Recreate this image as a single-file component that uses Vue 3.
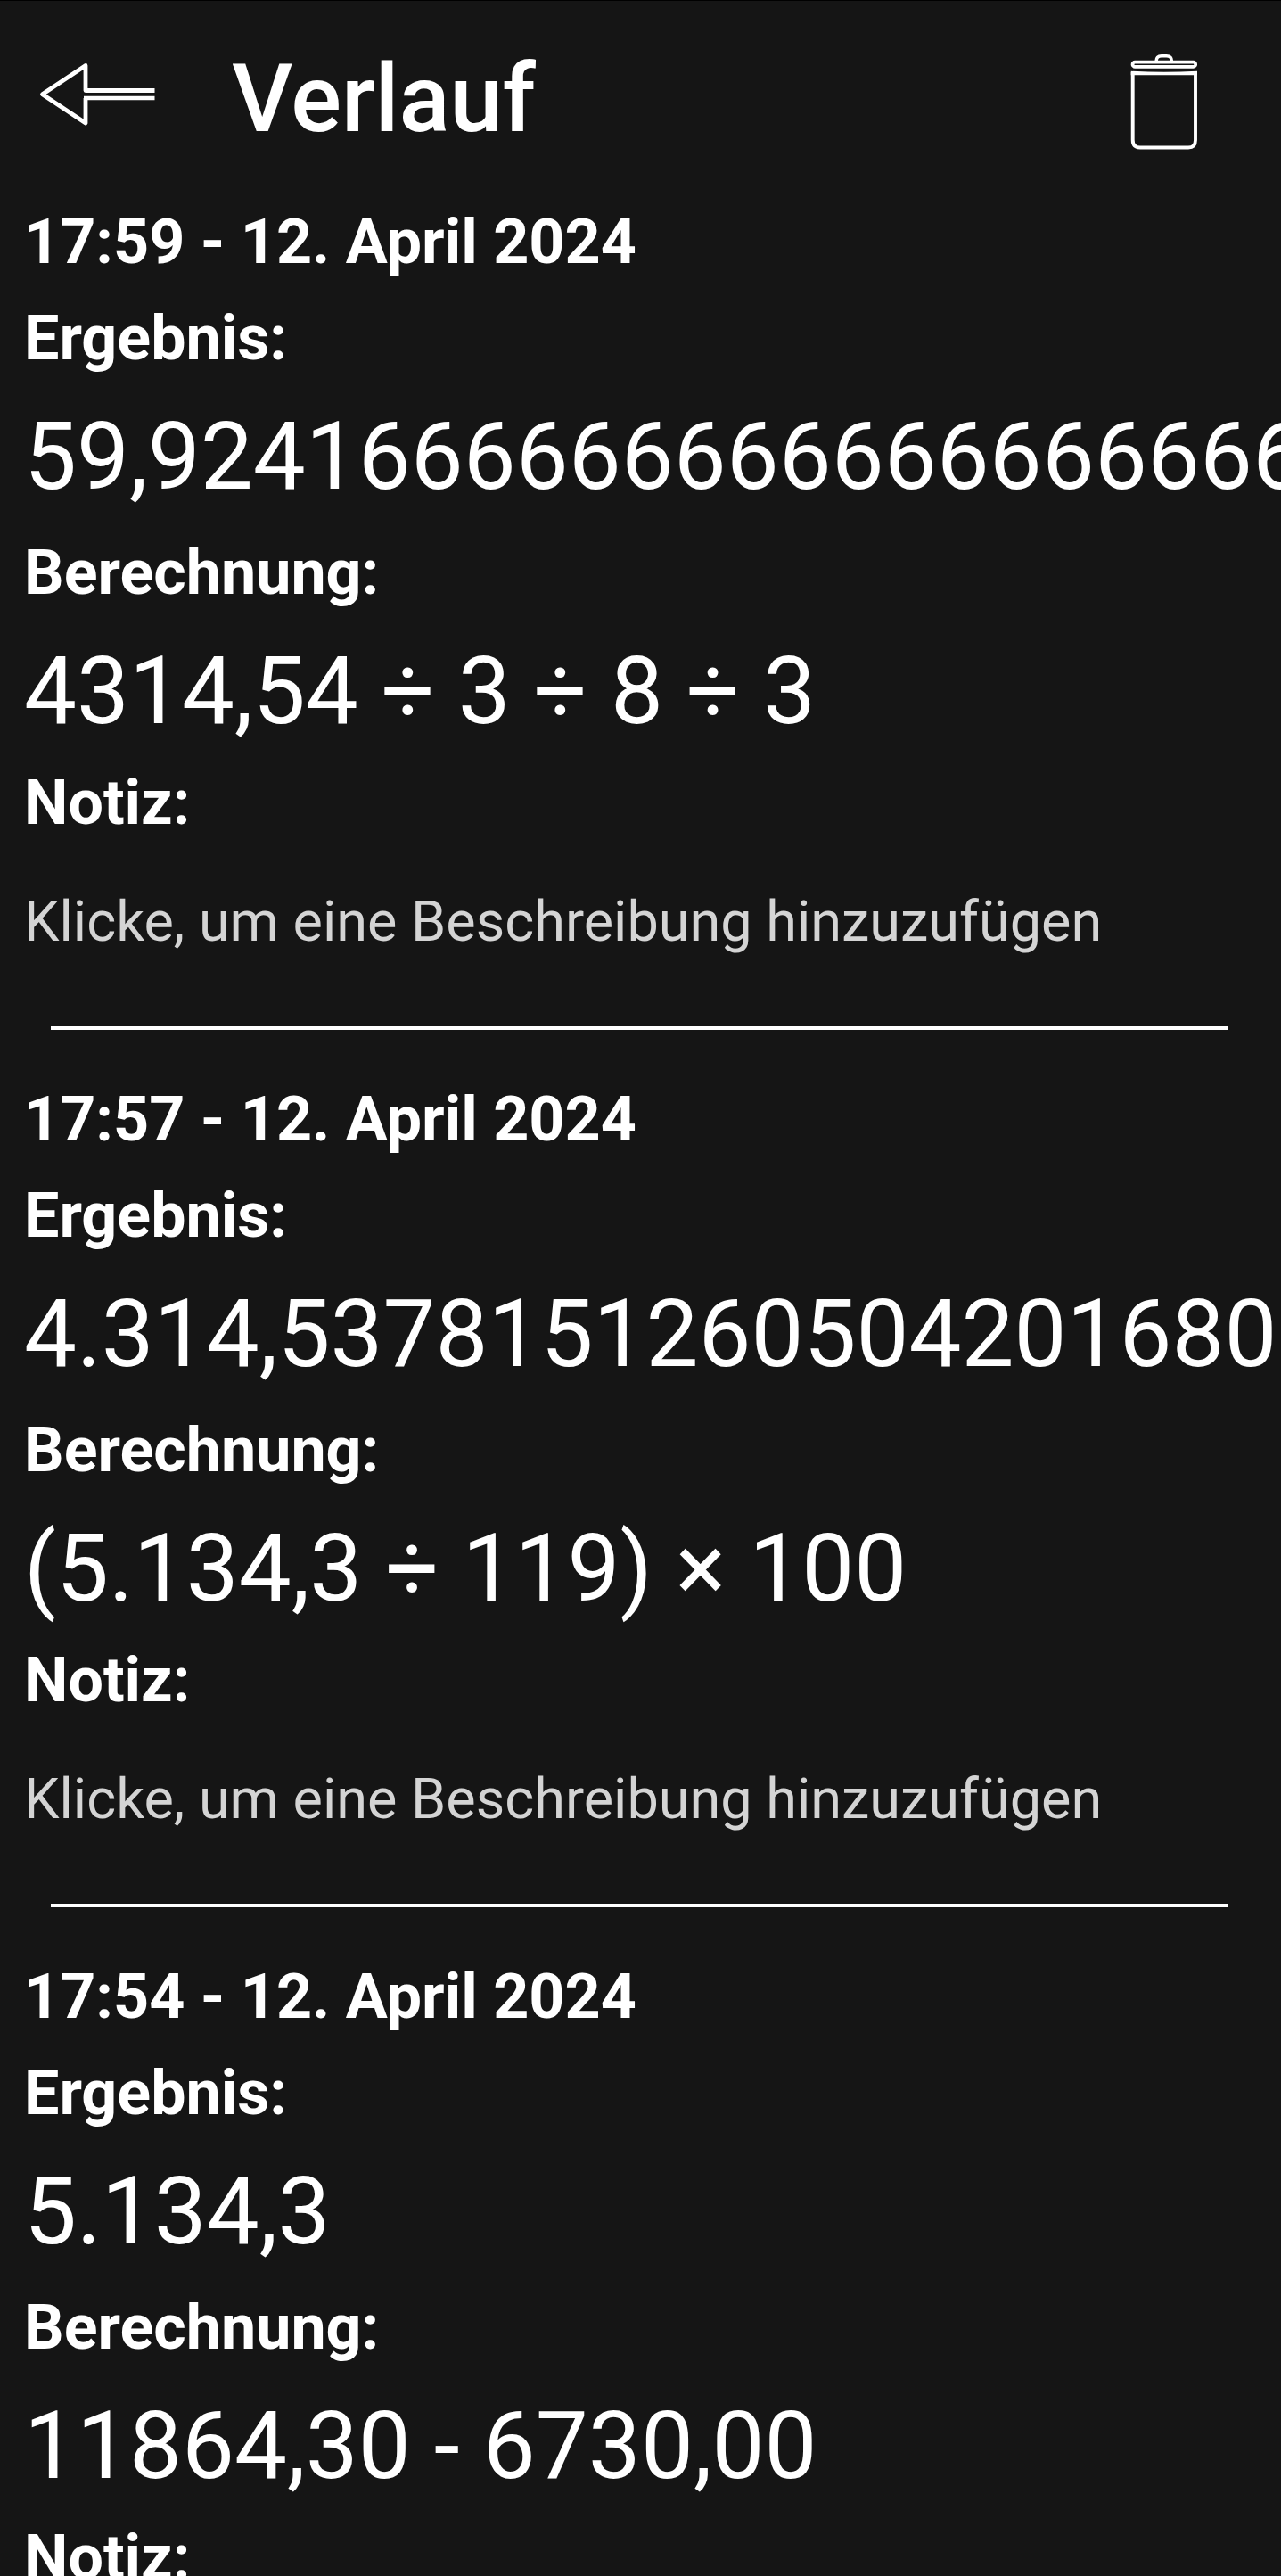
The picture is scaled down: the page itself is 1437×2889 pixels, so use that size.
<script setup>
import { ref } from 'vue'

const entries = ref([
  {
    id: 1,
    date: '17:59 - 12. April 2024',
    result: '59,92416666666666666666666666666667',
    calculation: '4314,54 ÷ 3 ÷ 8 ÷ 3',
    note: '',
  },
  {
    id: 2,
    date: '17:57 - 12. April 2024',
    result: '4.314,5378151260504201680672268908',
    calculation: '(5.134,3 ÷ 119) × 100',
    note: '',
  },
  {
    id: 3,
    date: '17:54 - 12. April 2024',
    result: '5.134,3',
    calculation: '11864,30 - 6730,00',
    note: '',
  },
])
</script>

<template>
  <div class="screen">
    <header class="bar">
      <button class="icon-button" type="button" aria-label="Zurück">
        <svg width="132" height="83" viewBox="0 0 132 83" fill="none" stroke="#fff">
          <path d="M129.500 31.500H52V3.500L3.500 35.700L52 68V40" stroke-width="4.800" stroke-linejoin="round" />
          <path d="M50 40H129.500" stroke-width="4.600" />
        </svg>
      </button>
      <h1 class="title">Verlauf</h1>
      <button class="icon-button" type="button" aria-label="Verlauf löschen">
        <svg width="76" height="117" viewBox="0 0 76 117" fill="none" stroke="#fff">
          <path d="M29 16C29 11.500 31.500 9.800 35 9.800H40.500C44 9.800 46.500 11.500 46.500 16" stroke-width="3.500" />
          <rect x="2.500" y="16.600" width="70.700" height="5.200" rx="2.600" stroke-width="3.700" />
          <path d="M0.700 26.700Q38 29 75 26.700V31.300H0.700Z" fill="#fff" stroke="none" />
          <path d="M2.700 28V104Q2.700 112.500 11 112.500H65Q73 112.500 73 104V28" stroke-width="3.900" />
        </svg>
      </button>
    </header>

    <main class="list">
      <article v-for="entry in entries" :key="entry.id" class="entry">
        <h2 class="label">{{ entry.date }}</h2>
        <h3 class="label">Ergebnis:</h3>
        <p class="value">{{ entry.result }}</p>
        <h3 class="label">Berechnung:</h3>
        <p class="value calculation">{{ entry.calculation }}</p>
        <label class="label" :for="`note-${entry.id}`">Notiz:</label>
        <input
          :id="`note-${entry.id}`"
          v-model="entry.note"
          class="note"
          type="text"
          placeholder="Klicke, um eine Beschreibung hinzuzufügen"
        />
        <hr class="divider" />
      </article>
    </main>
  </div>
</template>

<style>
html,
body {
  margin: 0;
  background: #151515;
}
</style>

<style scoped>
.screen {
  display: flex;
  flex-direction: column;
  height: 100vh;
  box-sizing: border-box;
  border-top: 1px solid #000;
  background: #151515;
  color: #fff;
  font-family: Roboto, "Liberation Sans", sans-serif;
}

.bar {
  display: flex;
  align-items: center;
  padding: 49px 93px 57px 44px;
}

.icon-button {
  display: flex;
  margin: 0;
  padding: 0;
  border: 0;
  background: none;
}

.title {
  flex: 1;
  margin: 0 0 0 84px;
  font-size: 106px;
  font-weight: 500;
  line-height: 123px;
}

.list {
  flex: 1;
  min-height: 0;
  overflow: hidden auto;
  scrollbar-width: none;
}

.entry {
  display: flex;
  flex-direction: column;
}

.label {
  margin: 0 27px 26px;
  font-size: 70px;
  font-weight: 700;
  line-height: 82px;
}

.value {
  margin: 5px 0 27px 27px;
  font-size: 105px;
  line-height: 123px;
  white-space: nowrap;
}

.calculation {
  margin-bottom: 22px;
}

.note {
  height: 74px;
  margin: 30px 27px 0;
  padding: 0;
  border: 0;
  outline: 0;
  background: none;
  color: #fff;
  font-family: inherit;
  font-size: 63px;
  line-height: 74px;
}

.note::placeholder {
  color: #d4d4d4;
  opacity: 1;
}

.divider {
  width: auto;
  height: 4px;
  margin: 80px 60px 59px 57px;
  border: 0;
  background: #fff;
}
</style>
